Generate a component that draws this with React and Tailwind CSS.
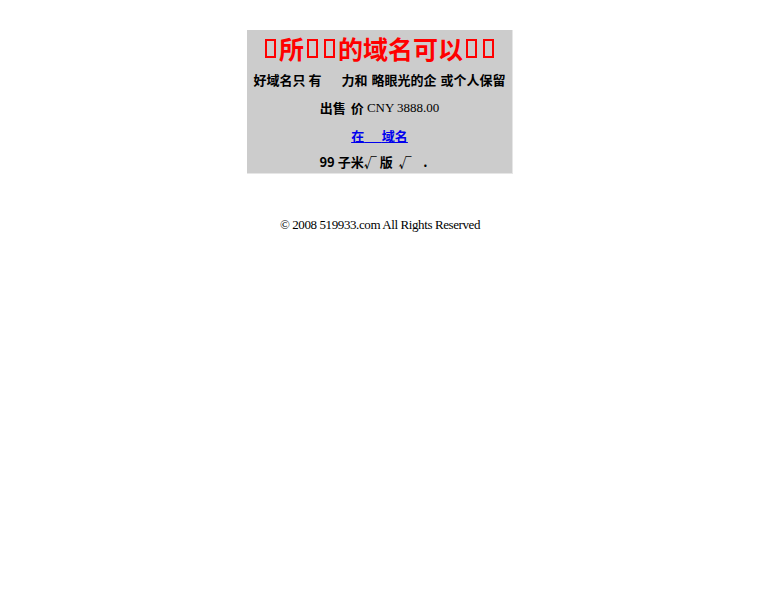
const cjk = "font-['Noto_Sans_CJK_SC',sans-serif]";

function Tofu() {
  return <span className="inline-block w-[11px] h-[19px] mx-[3px] border-2 border-[#ff0000] align-[-2px]" />;
}

function Gap({ w }) {
  return <span className="inline-block" style={{ width: w }} />;
}

export default function App() {
  return (
    <div className="min-h-[600px] bg-white pt-[30px]">
      <div className="mx-auto w-[266px] bg-[#cccccc] border-r border-b border-[#e6e6e6] text-center">
        <div className={`h-[36px] flex items-center justify-center text-[25px] leading-none font-bold text-[#ff0000] ${cjk}`}>
          <Tofu />
          <span>所</span>
          <Tofu />
          <Tofu />
          <span>的域名可以</span>
          <Tofu />
          <Tofu />
        </div>
        <div className={`h-[28px] flex items-center justify-center text-[13px] font-bold text-black whitespace-pre ${cjk}`}>
          <span>好域名只</span>
          <Gap w={3} />
          <span>有</span>
          <Gap w={20} />
          <span>力和</span>
          <Gap w={4} />
          <span>略眼光的企</span>
          <Gap w={4} />
          <span>或个人保留</span>
        </div>
        <div className="h-[28px] flex items-center justify-center text-[13px] text-black">
          <span className={`font-bold ${cjk}`}>出售</span>
          <Gap w={5} />
          <span className={`font-bold ${cjk}`}>价</span>
          <span className="font-['Liberation_Serif',serif] whitespace-pre"> CNY 3888.00</span>
        </div>
        <div className="h-[28px] flex items-center justify-center text-[13px]">
          <a href="#" className={`font-bold text-[#0000ee] underline whitespace-pre ${cjk}`}>
            在{'\u00a0\u00a0\u00a0\u00a0\u00a0\u00a0'}域名
          </a>
        </div>
        <div className={`h-[23px] flex items-center justify-center text-[13px] font-bold text-black whitespace-pre ${cjk}`}>
          <span>99 子米√ 版  √    .</span>
          <Gap w={12} />
        </div>
      </div>
      <p className="mt-[43px] text-center text-[13px] leading-4 text-black font-['Liberation_Serif',serif] tracking-[-0.4px]">
        © 2008 519933.com All Rights Reserved
      </p>
    </div>
  );
}
